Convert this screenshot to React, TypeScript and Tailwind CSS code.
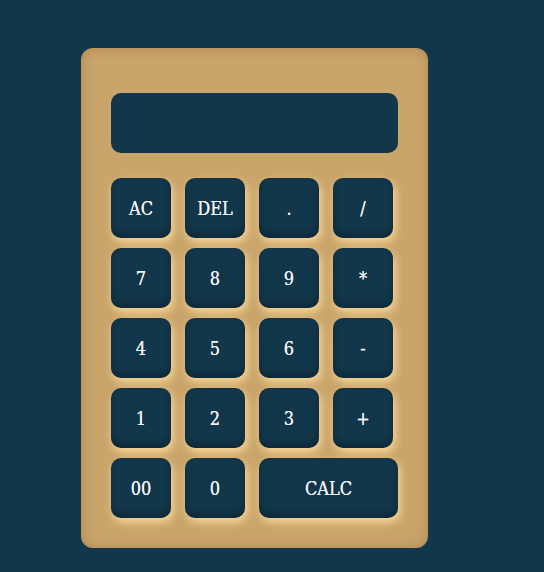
const keys = [
  "AC", "DEL", ".", "/",
  "7", "8", "9", "*",
  "4", "5", "6", "-",
  "1", "2", "3", "+",
  "00", "0",
];

const btn =
  "flex h-[60px] items-center justify-center rounded-[10px] bg-[#12364a] text-[18px] text-[#f4f4f4] [text-shadow:0_0_0.6px_#f4f4f4] shadow-[inset_0_-4px_6px_rgba(0,0,0,0.25),2px_4px_10px_rgba(255,226,160,0.9)]";

export default function App() {
  return (
    <div className="min-h-[572px] bg-[#12364a] pl-[81px] pt-[48px]">
      {/* body */}
      <div className="w-[347px] rounded-[12px] bg-[#c9a46b] px-[30px] pb-[30px] pt-[45px] shadow-[inset_0_0_12px_rgba(120,80,30,0.35)] [font-family:'DejaVu_Serif_Condensed','DejaVu_Serif',serif] [font-stretch:semi-condensed]">
        <div className="h-[60px] w-[287px] rounded-[10px] bg-[#12364a]" />
        <div className="mt-[25px] grid w-[287px] grid-cols-[60px_60px_60px_60px] gap-x-[14px] gap-y-[10px]">
          {keys.map((k) => (
            <button key={k} className={btn}>
              {k}
            </button>
          ))}
          <button className={btn + " col-span-2 w-[139px]"}>CALC</button>
        </div>
      </div>
    </div>
  );
}
